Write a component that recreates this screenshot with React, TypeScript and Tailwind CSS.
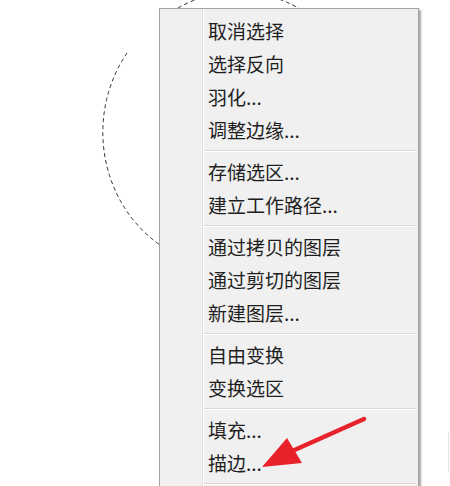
const groups = [
  ['取消选择', '选择反向', '羽化...', '调整边缘...'],
  ['存储选区...', '建立工作路径...'],
  ['通过拷贝的图层', '通过剪切的图层', '新建图层...'],
  ['自由变换', '变换选区'],
  ['填充...', '描边...'],
];

function Selection() {
  // marching-ants selection, partly hidden behind the menu
  return (
    <svg className="absolute left-0 top-0" width="450" height="486" fill="none">
      <path
        d="M 127 53 A 127 135 0 0 0 160 245"
        stroke="#333"
        strokeWidth="1"
        strokeDasharray="4 3"
      />
      <path
        d="M 178 8 A 127 135 0 0 1 300 9"
        stroke="#333"
        strokeWidth="1"
        strokeDasharray="4 3"
      />
    </svg>
  );
}

function Arrow() {
  return (
    <svg className="absolute left-0 top-0 pointer-events-none" width="450" height="486" fill="none">
      <line x1="364" y1="419" x2="290" y2="452" stroke="#e8222b" strokeWidth="4.5" strokeLinecap="round" />
      <polygon points="262,467 287,438 302,463" fill="#e8222b" />
    </svg>
  );
}

function Separator() {
  return (
    <div className="h-[9px] flex flex-col justify-center">
      <div className="border-t border-[#d9d9d9] border-b border-b-white" />
    </div>
  );
}

export default function App() {
  return (
    <div className="relative w-[450px] h-[486px] overflow-hidden bg-white font-['Noto_Sans_CJK_SC','Noto_Sans',sans-serif]">
      <Selection />
      <div className="relative pt-[8px] pl-[159px]">
        <div className="w-[260px] border border-[#a3a3a3] bg-[#f0f0f0] shadow-[2px_2px_2px_rgba(0,0,0,0.35)] flex">
          <div className="w-[43px] shrink-0 border-r border-[#e0e0e0]" />
          <div className="flex-1 border-l border-white pt-[5px] pr-[2px]">
            {groups.map((items, gi) => (
              <div key={gi}>
                {gi > 0 && <Separator />}
                {items.map((label) => (
                  <div key={label} className="h-[33px] flex items-center pl-[4px] text-[19px] leading-none text-[#1e1e1e]">
                    {label}
                  </div>
                ))}
              </div>
            ))}
            <Separator />
          </div>
        </div>
      </div>
      <div className="absolute left-[448px] top-[432px] w-px h-[40px] bg-[#e4e4e4]" />
      <Arrow />
    </div>
  );
}
